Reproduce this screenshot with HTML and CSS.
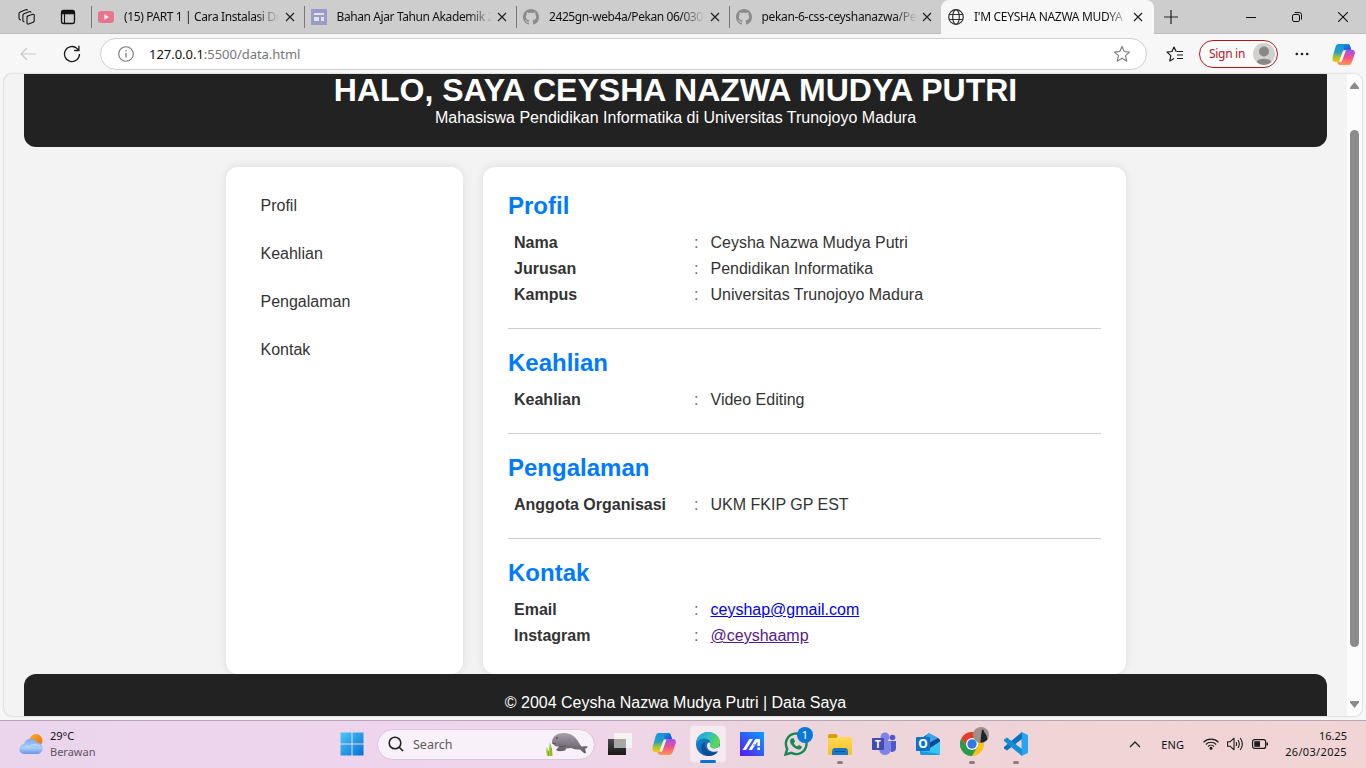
FILE: index.html
```html
<!DOCTYPE html>
<html lang="id">
<head>
<meta charset="utf-8">
<title>I'M CEYSHA NAZWA MUDYA PUTRI</title>
<link rel="stylesheet" href="styles.css">
</head>
<body>
<svg class="defs" width="0" height="0">
  <defs>
    <linearGradient id="cpA" x1="0" y1="0" x2="0" y2="1"><stop offset="0" stop-color="#1494f0"/><stop offset=".45" stop-color="#2a9fb8"/><stop offset=".75" stop-color="#a9c832"/><stop offset="1" stop-color="#f5c713"/></linearGradient>
    <linearGradient id="cpB" x1="0" y1="0" x2="0" y2="1"><stop offset="0" stop-color="#9a52f0"/><stop offset=".5" stop-color="#f0508e"/><stop offset="1" stop-color="#ff9a4a"/></linearGradient>
    <linearGradient id="cpC" x1="0" y1="0" x2="1" y2="1"><stop offset="0" stop-color="#1aa5f5"/><stop offset="1" stop-color="#1a3fc4"/></linearGradient>
    <linearGradient id="win" x1="0" y1="0" x2="1" y2="1"><stop offset="0" stop-color="#4cc8f8"/><stop offset="1" stop-color="#0670d0"/></linearGradient>
    <linearGradient id="cloud" x1="0" y1="0" x2="0" y2="1"><stop offset="0" stop-color="#7fa9ec"/><stop offset=".6" stop-color="#a8cdfa"/><stop offset="1" stop-color="#6b95e4"/></linearGradient>
    <linearGradient id="sun" x1="0" y1="0" x2="1" y2="1"><stop offset="0" stop-color="#f5b21c"/><stop offset="1" stop-color="#f06a10"/></linearGradient>
    <linearGradient id="edgeTop" x1="0" y1="0" x2="1" y2=".4"><stop offset="0" stop-color="#1aa0dc"/><stop offset=".5" stop-color="#2bbfc4"/><stop offset="1" stop-color="#5fdc50"/></linearGradient>
    <linearGradient id="edgeLow" x1="0" y1="0" x2="1" y2="1"><stop offset="0" stop-color="#1590dc"/><stop offset="1" stop-color="#0b4a94"/></linearGradient>
    <linearGradient id="armoury" x1="0" y1="1" x2="1" y2="0"><stop offset="0" stop-color="#5a18f0"/><stop offset="1" stop-color="#08a0ff"/></linearGradient>
    <linearGradient id="folder" x1="0" y1="0" x2="0" y2="1"><stop offset="0" stop-color="#ffdc60"/><stop offset="1" stop-color="#fcc022"/></linearGradient>
    <linearGradient id="tvDark" x1="0" y1="0" x2="0" y2="1"><stop offset="0" stop-color="#4a4a4a"/><stop offset="1" stop-color="#161616"/></linearGradient>
    <linearGradient id="manatee" x1="0" y1="0" x2="0" y2="1"><stop offset="0" stop-color="#a7a0a9"/><stop offset="1" stop-color="#5d5561"/></linearGradient>
    <symbol id="copilot" viewBox="0 0 24 24">
      <path d="M7 1h9c2 0 2.600 1.200 3.100 3L20 7h-3c-2 0-3 1-3.700 3.200L11 17c-.6 2-1.400 3-3.200 3H4C1 20 0 18 .5 15.500L3.500 4.500C4.200 2.200 5 1 7 1z" fill="url(#cpA)"/>
      <path d="M12 1h4c2 0 2.600 1.200 3.100 3L20 7h-3c-2 0-3 .6-3.600 2.200C12.700 7 12.400 1 8 1z" fill="url(#cpC)"/>
      <path d="M17 7h3.500C23.500 7 24.300 9 23.700 11.500l-3 8.500c-.7 2.200-1.700 3-3.700 3H9c-2.200 0-3-1.500-3.500-3h2.300c1.800 0 2.600-1 3.200-3l2.300-6.800C14 8 15 7 17 7z" fill="url(#cpB)"/>
      <path d="M14.500 7.500 10 19.500H7.500l3.400-10c.7-1.800 1.800-2.500 3.600-2z" fill="#fff" opacity=".85"/>
    </symbol>
    <symbol id="github" viewBox="0 0 16 16"><path d="M8 0C3.580 0 0 3.580 0 8c0 3.540 2.290 6.530 5.470 7.590.4.070.55-.17.55-.38 0-.19-.01-.82-.01-1.490-2.010.37-2.530-.49-2.690-.94-.09-.23-.48-.94-.82-1.130-.28-.15-.68-.52-.01-.53.63-.01 1.080.58 1.230.82.72 1.210 1.870.87 2.330.66.07-.52.28-.87.51-1.070-1.780-.2-3.640-.89-3.640-3.950 0-.87.31-1.590.82-2.150-.08-.2-.36-1.020.08-2.120 0 0 .67-.21 2.200.82.64-.18 1.320-.27 2-.27s1.360.09 2 .27c1.530-1.040 2.200-.82 2.200-.82.44 1.100.16 1.920.08 2.120.51.56.82 1.270.82 2.150 0 3.070-1.870 3.750-3.650 3.950.29.25.54.73.54 1.480 0 1.070-.01 1.930-.01 2.200 0 .21.15.46.55.38A8.010 8.010 0 0 0 16 8c0-4.420-3.580-8-8-8z" fill="#8b8b8d"/></symbol>
    <symbol id="close" viewBox="0 0 10 10"><path d="M1 1l8 8M9 1L1 9" stroke="#222" stroke-width="1.200" fill="none"/></symbol>
  </defs>
</svg>

<header class="tabstrip">
  <div class="tab-tools">
    <svg width="17" height="18" viewBox="0 0 17 18" fill="none" stroke="#111" stroke-width="1.100" stroke-linejoin="round"><path d="M9 8.300l5.800-2q1.400-.3 1.400 1v5.500q0 1-1 1.400l-4.600 1.800q-1.600.4-1.600-1.200V9.500q0-.8 1-1.200zM6.500 14q-1.600-.3-1.600-1.700V7.300q0-1.200 1-1.600l5.200-2q1.500-.5 2.100.8M3 12Q1 11.700 1 10V5.600q0-1.200 1.200-1.700L7.700 1.800q1.400-.4 2 .5"/></svg>
    <svg width="16" height="16" viewBox="0 0 16 16" fill="none" stroke="#111"><rect x="1.500" y="1.500" width="13" height="13" rx="2.200" stroke-width="1.300"/><path d="M1.500 2.500h13v2.300h-13z" fill="#111"/><path d="M4.500 5v9.500" stroke-width="1.100"/></svg>
  </div>
  <div class="tab">
    <svg width="16" height="16" viewBox="0 0 16 16"><rect y="2" width="16" height="12" rx="3" fill="#e5768d"/><path d="M6.300 5.200v5.600L11 8z" fill="#fbe8ec"/></svg>
    <span class="tab-title t1">(15) PART 1 | Cara Instalasi De</span>
    <svg class="x" width="10" height="10"><use href="#close"/></svg>
  </div>
  <div class="tab">
    <svg width="16" height="16" viewBox="0 0 16 16"><path fill="#979cc8" d="M0 0h16v16H0z"/><path fill="#e4e4ee" d="M3 4h10v2H3zM3 8h5v4H3zM10 8h3v4h-3z"/></svg>
    <span class="tab-title t2">Bahan Ajar Tahun Akademik 2</span>
    <svg class="x" width="10" height="10"><use href="#close"/></svg>
  </div>
  <div class="tab">
    <svg width="16" height="16"><use href="#github"/></svg>
    <span class="tab-title t3">2425gn-web4a/Pekan 06/030</span>
    <svg class="x" width="10" height="10"><use href="#close"/></svg>
  </div>
  <div class="tab">
    <svg width="16" height="16"><use href="#github"/></svg>
    <span class="tab-title t4">pekan-6-css-ceyshanazwa/Pe</span>
    <svg class="x" width="10" height="10"><use href="#close"/></svg>
  </div>
  <div class="tab active">
    <svg width="16" height="16" viewBox="0 0 16 16" fill="none" stroke="#333" stroke-width="1.200"><circle cx="8" cy="8" r="7.300"/><ellipse cx="8" cy="8" rx="3.300" ry="7.300"/><path d="M1.300 5.500h13.400M1.300 10.500h13.400"/></svg>
    <span class="tab-title t5">I'M CEYSHA NAZWA MUDYA</span>
    <svg class="x" width="10" height="10"><use href="#close"/></svg>
  </div>
  <svg class="newtab" width="14" height="14" viewBox="0 0 14 14"><path d="M7 0v14M0 7h14" stroke="#222" stroke-width="1.200"/></svg>
  <div class="win-controls">
    <svg width="10" height="10" viewBox="0 0 10 10"><path d="M0 5.500h10" stroke="#111"/></svg>
    <svg width="10" height="10" viewBox="0 0 10 10" fill="none" stroke="#111"><rect x=".5" y="2.500" width="7" height="7" rx="1.500"/><path d="M2.700.5H7.300a2.200 2.200 0 0 1 2.200 2.200V7.500"/></svg>
    <svg width="10" height="10" viewBox="0 0 10 10"><path d="M0 0l10 10M10 0L0 10" stroke="#111" stroke-width="1.100"/></svg>
  </div>
</header>

<nav class="toolbar">
  <svg width="16" height="14" viewBox="0 0 16 14" fill="none" stroke="#c8c8c8" stroke-width="1.200"><path d="M16 7H1M7 1L1 7l6 6"/></svg>
  <svg width="18" height="18" viewBox="0 0 18 18" fill="none" stroke="#1b1b1b" stroke-width="1.300"><path d="M16.500 9a7.500 7.500 0 1 1-2.300-5.400l1.600 1.600M15.900.8v4.700h-4.700"/></svg>
  <div class="address">
    <svg width="16" height="16" viewBox="0 0 16 16" fill="none" stroke="#767676"><circle cx="8" cy="8" r="7.300" stroke-width="1.100"/><path d="M8 7v4.500M8 4.200v1.400" stroke-width="1.300"/></svg>
    <span class="url"><b>127.0.0.1</b>:5500/data.html</span>
    <svg class="star" width="18" height="18" viewBox="0 0 18 18" fill="none" stroke="#777" stroke-width="1.100" stroke-linejoin="round"><path d="M9 1.500l2.200 5 5.300.6-4 3.500 1.200 5.500L9 13.300l-4.700 2.800 1.200-5.500-4-3.500 5.300-.6z"/></svg>
  </div>
  <svg class="fav" width="18" height="18" viewBox="0 0 18 18" fill="none" stroke="#1b1b1b" stroke-width="1.200" stroke-linejoin="round"><path d="M10.700 6.300H10L8 2 6 6.500l-5 .6 3.800 3.500L3.800 16 8 13.400M11 6.500h6M11 10h6M11 13.500h6"/></svg>
  <div class="signin"><span>Sign in</span>
    <svg width="22" height="22" viewBox="0 0 22 22"><circle cx="11" cy="11" r="11" fill="#d2d0ce"/><circle cx="11" cy="8.500" r="5" fill="#8a8886"/><path d="M3.500 19a8 5 0 0 1 15 0 11 11 0 0 1-15 0z" fill="#8a8886"/></svg>
  </div>
  <svg class="dots" width="14" height="4" viewBox="0 0 14 4"><g fill="#1b1b1b"><circle cx="1.800" cy="2" r="1.300"/><circle cx="7" cy="2" r="1.300"/><circle cx="12.200" cy="2" r="1.300"/></g></svg>
  <svg class="cop" width="23" height="23"><use href="#copilot"/></svg>
</nav>

<main class="frame">
  <div class="viewport">
    <div class="hero">
      <h1>HALO, SAYA CEYSHA NAZWA MUDYA PUTRI</h1>
      <p>Mahasiswa Pendidikan Informatika di Universitas Trunojoyo Madura</p>
    </div>
    <div class="columns">
      <aside class="card menu"><a>Profil</a><a>Keahlian</a><a>Pengalaman</a><a>Kontak</a></aside>
      <div class="card content">
        <section><h2>Profil</h2>
          <div class="row"><b>Nama</b><i>:</i><span>Ceysha Nazwa Mudya Putri</span></div>
          <div class="row"><b>Jurusan</b><i>:</i><span>Pendidikan Informatika</span></div>
          <div class="row"><b>Kampus</b><i>:</i><span>Universitas Trunojoyo Madura</span></div>
        </section>
        <section><h2>Keahlian</h2>
          <div class="row"><b>Keahlian</b><i>:</i><span>Video Editing</span></div>
        </section>
        <section><h2>Pengalaman</h2>
          <div class="row"><b>Anggota Organisasi</b><i>:</i><span>UKM FKIP GP EST</span></div>
        </section>
        <section><h2>Kontak</h2>
          <div class="row"><b>Email</b><i>:</i><span class="link">ceyshap@gmail.com</span></div>
          <div class="row"><b>Instagram</b><i>:</i><span class="link visited">@ceyshaamp</span></div>
        </section>
      </div>
    </div>
    <footer class="foot">© 2004 Ceysha Nazwa Mudya Putri | Data Saya</footer>
  </div>
  <div class="scrollbar">
    <svg width="9" height="7" viewBox="0 0 9 7"><path d="M4.500 0 9 5.500V7H0V5.500z" fill="#8b8b8b"/></svg>
    <div class="thumb"></div>
    <svg width="9" height="7" viewBox="0 0 9 7"><path d="M4.500 7 9 1.500V0H0v1.500z" fill="#8b8b8b"/></svg>
  </div>
</main>

<footer class="taskbar">
  <div class="weather">
    <svg width="25" height="22" viewBox="0 0 25 22"><circle cx="17" cy="7.500" r="6.500" fill="url(#sun)"/><path d="M5.500 21a5 5 0 0 1-.5-10 7 7 0 0 1 13-1.500A5.800 5.800 0 0 1 19 21z" fill="url(#cloud)"/><path d="M6 13q3 0 4 1 2-3 6-2.500M15 12.500q3-2 6 .5" stroke="#d4e6ff" fill="none" opacity=".7"/></svg>
    <div><p>29°C</p><p class="dim">Berawan</p></div>
  </div>
  <div class="apps">
    <div class="app start"><svg width="24" height="24" viewBox="0 0 24 24"><path d="M.5.500h11v11H.5zM12.500.500h11v11h-11zM.5 12.500h11v11H.5zM12.500 12.500h11v11h-11z" fill="url(#win)"/></svg></div>
    <div class="search">
      <svg width="16" height="16" viewBox="0 0 16 16" fill="none" stroke="#222" stroke-width="1.600"><circle cx="7" cy="7" r="5.800"/><path d="M11.200 11.200L15 15"/></svg>
      <span>Search</span>
      <svg class="art" width="42" height="26" viewBox="0 0 42 26"><path d="M1 25q-1.500-6 0-9l1.500 5L4 11q3 8 2.500 14z" fill="#a8c936"/><path d="M2.500 25v-5M5 25v-8" stroke="#6f9e25" stroke-width=".8"/><path d="M6 10C7 5 11 2 18 2c7 0 12 4 15 10l2.500 3.500 5-.5q1.500.5 1 1.500l-2.500 1.500 1 3.500q-.5 1.200-2 .5l-4-3.500q-4 .5-9-1.500l-5 .5q0 2.500-4 2.500-5 .5-6-1l3-3.500q-3.500.5-5-1.500-2.500-1.500-2-4z" fill="url(#manatee)"/><path d="M13 15q4 2 7-.5M6 12q2 1.500 4 0" stroke="#4f4854" stroke-width=".8" fill="none"/><circle cx="11" cy="7" r=".8" fill="#222"/></svg>
    </div>
    <div class="app"><svg width="24" height="24" viewBox="0 0 24 24"><path d="M6 1h18v15H6z" fill="#f4f2f3"/><path d="M0 7h18v16H0z" fill="url(#tvDark)"/><path d="M6 7h12v9H6z" fill="#aaa8a7"/></svg></div>
    <div class="app"><svg width="24" height="24"><use href="#copilot"/></svg></div>
    <div class="app current"><svg width="24" height="24" viewBox="0 0 24 24"><circle cx="12" cy="12" r="12" fill="url(#edgeLow)"/><path d="M0 12C0 5 5.500 0 12 0c7 0 12 4.800 12 10.300 0 4-3 6.200-6.500 6.200-3 0-4.300-1.200-3.500-2.500 2-3.800-.8-7.500-5.500-7.500C4 6.500 1 9 0 12z" fill="url(#edgeTop)"/><path d="M9.500 9.500C7 14 10 21 17 21c2 0 4-.5 5.500-2C20 23 16 24 12 24 4 22 3 12.500 9.500 9.500z" fill="#0c4f94"/><path d="M12 11c.8-.8 2.300-.5 2.500.8.100 1-.8 1.800-.5 2.700.4 1.300 2 2 4 2 2.500 0 4.500-1.200 5.500-2.800l.5 4.300-1.500.7C19 21 11.500 19.500 11 14.500c-.1-1.400.2-2.700 1-3.500z" fill="#f6e9f1"/></svg></div>
    <div class="app"><svg width="24" height="24" viewBox="0 0 24 24"><path d="M0 0h24v24H0z" fill="url(#armoury)"/><path d="M2.500 18L9.500 7H13L6 18zM8.500 18l7-11h4.500v7h-2.600V9.500L12 18zM17.400 15.500H20V18h-2.600z" fill="#fff"/><path d="M13 13h4" stroke="#7773f8"/></svg></div>
    <div class="app"><svg width="24" height="24" viewBox="0 0 24 24" fill="none" stroke="#168951" stroke-width="2.400"><path d="M1.500 22.500l1.700-5.700a10.300 10.300 0 1 1 4.200 4.100z"/><path d="M7.500 6.500l2-.6 1.600 3.600-1.400 1.700q1.200 2.200 3.400 3.200l1.700-1.500 3 1.700-.5 2q-2 2-6-.4-5.500-3.500-5.200-7.700.2-1.300 1.400-2z" fill="#168951" stroke="none"/></svg><span class="badge">1</span></div>
    <div class="app running"><svg width="24" height="24" viewBox="0 0 24 24"><path d="M0 4q0-2 2-2h6l3 3h11q2 0 2 2v15q0 1-1 1H1q-1 0-1-1z" fill="url(#folder)"/><path d="M0 4q0-2 2-2h6l2 2-2 2H0z" fill="#dd9d08"/><path d="M4 23v-3q0-4 3-4h10q3 0 3 4v3z" fill="#1778c8"/><path d="M7 19.500h10" stroke="#0d559a"/></svg></div>
    <div class="app"><svg width="24" height="24" viewBox="0 0 24 24"><circle cx="13" cy="5" r="4.500" fill="#7b83eb"/><circle cx="20.500" cy="5.500" r="2.800" fill="#5059c9"/><path d="M16 9h8v7q0 4-5 4z" fill="#5059c9"/><path d="M7 9h12v7q0 7-6 7-6-.5-6-7z" fill="#7b83eb"/><rect y="6" width="12" height="12" rx="1" fill="#434aaa"/><text x="6" y="15.500" class="logo-t">T</text></svg></div>
    <div class="app"><svg width="24" height="24" viewBox="0 0 24 24"><path d="M4 7L13 1.300 22 6v10H4z" fill="#1474c8"/><path d="M11 2.500L13 1.300 24 7.500 15 13 9 9z" fill="#38a6eb"/><path d="M13 11l9-5 2 2v8l-9 3z" fill="#12488e"/><path d="M4 17l10-1L24 9.500V21q0 2-2 2H6q-2 0-2-2z" fill="#35c6f5"/><path d="M4 19l20 3q-.7 1-2 1H6q-2 0-2-2z" fill="#1a9ae0"/><rect y="5" width="14" height="14" rx="1" fill="#0f6fc9"/><text x="7" y="16.200" class="logo-o">O</text></svg></div>
    <div class="app running"><svg width="24" height="24" viewBox="0 0 24 24"><circle cx="12" cy="12" r="12" fill="#fbc116"/><path d="M12 6h10.400A12 12 0 0 0 1.600 6L6.800 15z" fill="#e33b2e"/><path d="M1.600 6A12 12 0 0 0 12 24l5.200-9H6.800z" fill="#269b4c"/><circle cx="12" cy="12" r="6" fill="#fff"/><circle cx="12" cy="12" r="4.700" fill="#2f78e8"/></svg>
      <svg class="avatar" width="16" height="16" viewBox="0 0 16 16"><circle cx="8" cy="8" r="8" fill="#9c9089"/><path d="M9 2.500q2 0 2 2l2.500 4 1 4q-3 3-7 3.300l.5-7z" fill="#1d2430"/></svg></div>
    <div class="app running"><svg width="24" height="24" viewBox="0 0 24 24"><path d="M17.500 0L24 3v18l-6.500 3z" fill="#25a6ee"/><path d="M18 0v7L3 18.500 0 16.500v-1.500z" fill="#0872bd"/><path d="M18 24v-7L3 5.500 0 7.500V9z" fill="#168cd7"/></svg></div>
  </div>
  <div class="tray">
    <svg class="chev" width="12" height="7" viewBox="0 0 12 7"><path d="M1 6l5-5 5 5" fill="none" stroke="#222" stroke-width="1.300"/></svg>
    <span class="lang">ENG</span>
    <svg class="wifi" width="16" height="12" viewBox="0 0 16 12" fill="none" stroke="#1a1a1a" stroke-width="1.100"><path d="M.5 4.300a10.500 10.500 0 0 1 15 0M2.800 6.500a7.300 7.300 0 0 1 10.400 0M5 8.500a4.300 4.300 0 0 1 6 0"/><circle cx="8" cy="10.300" r="1" fill="#1a1a1a"/></svg>
    <svg class="vol" width="17" height="14" viewBox="0 0 17 14" fill="none" stroke="#1a1a1a" stroke-width="1.100" stroke-linejoin="round"><path d="M.6 4.800h2.500L7 1.200v11.600L3.100 9.200H.6zM9 5q1.200 2 0 4M11 3q2.500 4 0 8M13.200 1q4.300 6 0 12"/></svg>
    <svg class="bat" width="16" height="10" viewBox="0 0 16 10"><rect x=".6" y=".6" width="13" height="8.800" rx="2" fill="none" stroke="#1a1a1a" stroke-width="1.200"/><path d="M2.300 2.300h5.700v5.400H2.300zM14.500 3.500H16v3h-1.500z" fill="#1a1a1a"/></svg>
    <div class="clock"><p>16.25</p><p class="date">26/03/2025</p></div>
  </div>
</footer>
</body>
</html>
```

FILE: styles.css
```css
* { box-sizing: border-box; }
body { margin: 0; width: 1366px; height: 768px; overflow: hidden; display: flex; flex-direction: column; background: #f7f7f7; font: 12px "Noto Sans", sans-serif; color: #111; }
p, h1, h2 { margin: 0; }
svg { flex: none; display: block; }
.defs { position: absolute; }

.tabstrip { height: 34px; flex: none; display: flex; background: #cdcdcd; border-bottom: 1px solid #bdbdbd; }
.tab-tools { width: 91px; display: flex; align-items: center; gap: 25px; padding-left: 18px; }
.tab { width: 212.500px; height: 34px; display: flex; align-items: center; padding: 0 9px 0 6px; border-left: 1px solid transparent; border-image: linear-gradient(transparent 7px, #777 7px, #777 27px, transparent 27px) 1; }
.tab.active { background: #f7f7f7; border: 0; border-radius: 8px 8px 0 0; width: 213px; padding: 0 11px 0 7px; }
.tab-title { width: 156px; margin-left: 10px; white-space: nowrap; line-height: 20px; letter-spacing: -.34px; -webkit-mask-image: linear-gradient(90deg, #000 132px, transparent 155px); mask-image: linear-gradient(90deg, #000 132px, transparent 155px); }
.t1 { letter-spacing: -.38px; }
.t2 { letter-spacing: -.4px; }
.t3 { letter-spacing: -.42px; }
.t4 { letter-spacing: -.33px; }
.t5 { letter-spacing: -.31px; }
.tab .x { margin-left: auto; }
.newtab { margin: 10px 0 0 10px; }
.win-controls { margin-left: auto; display: flex; align-items: center; gap: 36px; padding-right: 18px; }

.toolbar { height: 39px; flex: none; display: flex; align-items: center; padding-left: 20px; padding-top: 1px; }
.toolbar > svg:nth-child(2) { margin-left: 27px; }
.address { width: 1047px; height: 32px; margin-left: 19px; border: 1px solid #d0d0d0; border-radius: 16px; background: #fff; display: flex; align-items: center; padding: 0 15px 0 17px; }
.url { margin-left: 15px; font-size: 13px; color: #767676; letter-spacing: -.03px; }
.url b { font-weight: 400; color: #111; }
.star { margin-left: auto; }
.fav { margin-left: 19px; }
.signin { width: 79px; height: 28px; margin-left: 15px; border: 1px solid #b3171d; border-radius: 14px; background: #fbfbfb; display: flex; align-items: center; justify-content: space-between; padding: 0 2px 0 9px; color: #b3171d; white-space: nowrap; }
.signin span { letter-spacing: -.3px; margin-top: -1px; }
.dots { margin-left: 17px; }
.cop { margin-left: 23px; }

.frame { width: 1358px; height: 642px; flex: none; margin: 1px 4px 0; display: flex; border-radius: 8px; overflow: hidden; background: #f3f3f3; box-shadow: 0 0 2px #aaa; }
.viewport { width: 1343px; overflow: hidden; padding: 0 20px; font: 16px "Liberation Sans", Arial, sans-serif; color: #333; }
.hero { height: 73px; background: #222; color: #fff; border-radius: 0 0 12px 12px; text-align: center; }
.hero h1 { font-size: 32px; line-height: 33px; padding-bottom: 2px; white-space: nowrap; }
.hero p { line-height: 18px; }
.columns { width: 900px; height: 507px; margin: 20px auto 0; display: flex; gap: 20px; }
.card { background: #fff; border-radius: 12px; box-shadow: 0 0 10px rgba(0,0,0,.1); }
.menu { width: 237.500px; padding: 15px 35px; display: flex; flex-direction: column; }
.menu a { line-height: 48px; }
.content { width: 642.500px; padding: 25px; }
.content section + section { border-top: 1px solid #ccc; margin-top: 20px; padding-top: 20px; }
.content h2 { color: #007bff; font-size: 24px; line-height: 27px; margin-bottom: 11px; }
.row { display: grid; grid-template-columns: 180px 16.500px 1fr; padding-left: 6px; line-height: 26px; white-space: nowrap; }
.row i { font-style: normal; color: #666; }
.link { color: #0000ee; text-decoration: underline; }
.visited { color: #551a8b; }
.foot { height: 60px; background: #222; color: #fff; border-radius: 12px 12px 0 0; text-align: center; padding-top: 20px; line-height: 18px; position: relative; }
.scrollbar { width: 15px; background: #fcfcfc; display: flex; flex-direction: column; align-items: center; padding: 8px 0; }
.thumb { width: 9px; height: 517px; margin: 41px 0 auto; border-radius: 5px; background: #8b8b8b; }

.taskbar { height: 48px; flex: none; margin-top: 4px; border-top: 1px solid #b7a5b5; background: linear-gradient(90deg, #ead5ec 0, #efd5ed 32%, #efd5e7 45%, #ecd5db 60%, #f0d4d6 78%, #f1d5d5 100%); display: flex; align-items: stretch; }
.weather { width: 329.500px; display: flex; padding: 7px 0 0 19px; line-height: 16px; font-size: 11px; }
.weather svg { margin: 5px 6px 0 0; }
.dim { color: #5d555d; }
.apps { display: flex; align-items: center; height: 46px; }
.app { width: 44px; height: 46px; display: flex; align-items: center; justify-content: center; position: relative; }
.search { width: 218px; height: 31px; margin: 0 3px 0 3.500px; border: 1px solid #dcc5dc; border-radius: 16px; background: #f8f1f9; display: flex; align-items: center; padding: 0 6px 0 10px; color: #5d595d; }
.search span { margin-left: 9px; font-size: 12.500px; }
.art { margin-left: auto; }
.current { width: 38px; height: 38px; margin: 0 3px; background: #f6e9f1; border: 1px solid #eadbe4; border-radius: 5px; }
.current::after { content: ""; position: absolute; bottom: -1px; width: 16px; height: 3px; border-radius: 2px; background: #0a74d4; }
.running::after { content: ""; position: absolute; bottom: 3px; width: 6px; height: 3px; border-radius: 2px; background: #8e7c80; }
.badge { position: absolute; left: 23px; top: 6px; width: 16px; height: 16px; border-radius: 50%; background: #0a78d4; color: #fff; font-size: 11px; line-height: 16px; text-align: center; }
.avatar { position: absolute; left: 23px; top: 6px; }
.logo-t, .logo-o { fill: #fff; font: bold 10px "Noto Sans", sans-serif; text-anchor: middle; }
.logo-o { font-size: 12px; }
.tray { margin-left: auto; height: 46px; display: flex; align-items: center; padding-right: 19px; }
.chev { margin-right: 20px; }
.lang { margin-right: 19px; font-size: 11px; letter-spacing: .1px; }
.vol { margin-left: 8px; }
.bat { margin-left: 8px; }
.clock { width: 79px; text-align: right; line-height: 16px; font-size: 11px; }
.date { letter-spacing: .33px; }
```
